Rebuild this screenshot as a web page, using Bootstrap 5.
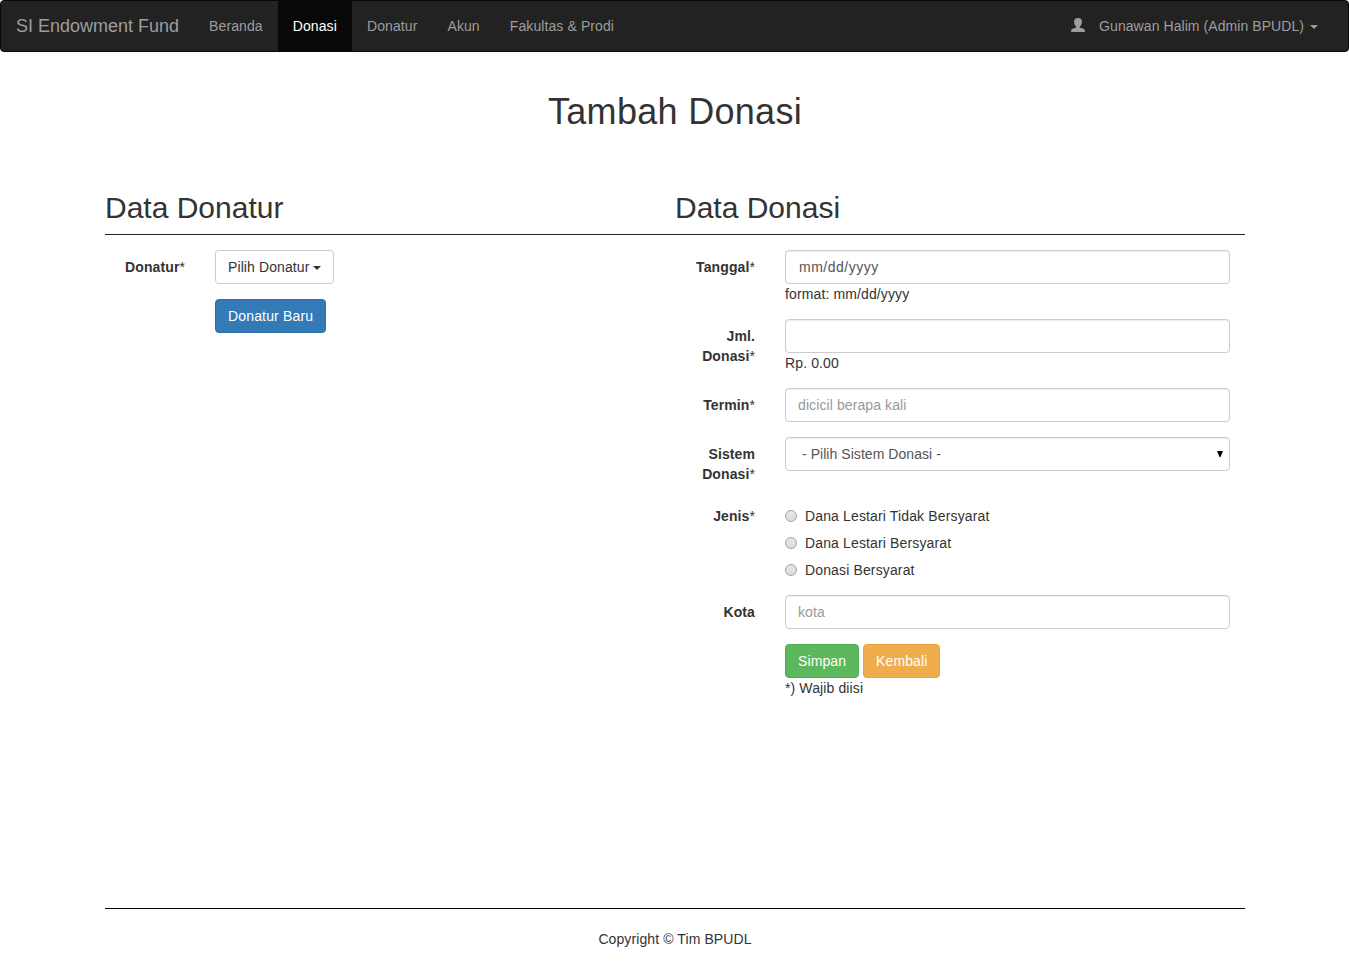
<!DOCTYPE html>
<html lang="id">
<head>
<meta charset="utf-8">
<meta name="viewport" content="width=device-width, initial-scale=1">
<title>Tambah Donasi</title>
<link href="https://cdn.jsdelivr.net/npm/bootstrap@5.3.0/dist/css/bootstrap.min.css" rel="stylesheet">
<style>
body{font-family:"Liberation Sans",Arial,sans-serif;font-size:14px;line-height:20px;letter-spacing:.1px;color:#333;background:#fff}
.topbar{height:52px;background:#222;border:1px solid #080808;border-radius:4px;padding:0 15px;align-items:stretch}
.topbar .navbar-brand{font-size:18px;line-height:20px;letter-spacing:0;padding:15px 0;margin:0 15px 0 0;color:#9d9d9d}
.topbar .navbar-nav .nav-link{padding:15px;color:#9d9d9d;line-height:20px;white-space:nowrap}
.topbar .navbar-nav .nav-link.active{background:#080808;color:#fff}
.arrow-down{display:inline-block;border-top:4px solid;border-left:4px solid transparent;border-right:4px solid transparent;vertical-align:middle;margin-left:2px}
.user-icon{margin:2px 14px 0 0}
.user-name{letter-spacing:.07px}
.page{width:1140px;margin-left:105px}
h1{font-size:36px;line-height:40px;letter-spacing:.3px;margin:40px 0 59px;font-weight:400}
h2{font-size:30px;line-height:33px;letter-spacing:0;margin:0 0 10px;font-weight:400}
.section-rule{border-top:1px solid #222;margin-bottom:15px}
.line-item{margin-bottom:15px}
.line-item>div,.line-item>label,.action-cell{padding:0 15px}
.line-item>label{padding-top:7px;text-align:right;font-weight:700;letter-spacing:.1px}
.req{font-weight:400;color:#333}
.hint{letter-spacing:.12px}
.form-control,.form-select{height:34px;font-size:14px;line-height:20px;letter-spacing:.1px;padding:6px 12px;color:#555;border:1px solid #ccc;border-radius:4px;box-shadow:inset 0 1px 1px rgba(0,0,0,.075)}
.form-control::placeholder{color:#999}
.date-field::placeholder{color:#555}
.date-field{padding-left:13px;letter-spacing:.5px}
.form-select{padding-left:16px;letter-spacing:.05px;background-image:url("data:image/svg+xml,%3Csvg xmlns='http://www.w3.org/2000/svg' width='6' height='6'%3E%3Cpath d='M0 0h6L3.500 6h-1z'/%3E%3C/svg%3E");background-size:6px 6px;background-position:right 6px top 13px}
.btn{font-size:14px;line-height:20px;letter-spacing:.1px;padding:6px 12px;border-radius:4px}
.btn-pick{color:#333;background:#fff;border-color:#ccc}
.btn-primary{background:#337ab7;border-color:#2e6da4;letter-spacing:.16px}
.btn-success{background:#5cb85c;border-color:#4cae4c}
.btn-warning,.btn-warning:hover{background:#f0ad4e;border-color:#eea236;color:#fff}
.choice{padding-top:7px;display:flex;align-items:center;letter-spacing:.14px}
.choice input{appearance:none;width:12px;height:12px;margin:0 8px 0 0;border:1px solid #a3a3a3;border-radius:50%;background:linear-gradient(#e6e6e6,#dcdcdc)}
.form-area{height:658px}
.page-foot{border-top:1px solid #000;padding-top:20px}
</style>
</head>
<body>
<nav class="navbar navbar-expand topbar">
  <a class="navbar-brand" href="#">SI Endowment Fund</a>
  <ul class="navbar-nav me-auto">
    <li class="nav-item"><a class="nav-link" href="#">Beranda</a></li>
    <li class="nav-item"><a class="nav-link active" href="#">Donasi</a></li>
    <li class="nav-item"><a class="nav-link" href="#">Donatur</a></li>
    <li class="nav-item"><a class="nav-link" href="#">Akun</a></li>
    <li class="nav-item"><a class="nav-link" href="#">Fakultas &amp; Prodi</a></li>
  </ul>
  <ul class="navbar-nav">
    <li class="nav-item"><a class="nav-link d-flex" href="#"><svg class="user-icon" width="14" height="14" viewBox="0 0 14 14" fill="currentColor" aria-hidden="true"><path d="M7 0C4.500 0 3 1.500 3 4C3 5.800 3.900 7.500 5.200 8.500V9.600L1 11Q0 11.500 0 14H14Q14 11.500 13 11L8.800 9.600V8.500C10.100 7.500 11 5.800 11 4C11 1.500 9.500 0 7 0Z"/></svg><span class="user-name">Gunawan Halim (Admin BPUDL) <b class="arrow-down"></b></span></a></li>
  </ul>
</nav>
<main class="page">
  <h1 class="text-center">Tambah Donasi</h1>
  <div class="row g-0">
    <div class="col-6"><h2>Data Donatur</h2></div>
    <div class="col-6"><h2>Data Donasi</h2></div>
  </div>
  <div class="section-rule"></div>
  <div class="row g-0 form-area">
    <div class="col-6">
      <div class="row g-0 line-item">
        <label class="col-2">Donatur<span class="req">*</span></label>
        <div class="col-10"><button class="btn btn-pick" type="button">Pilih Donatur <span class="arrow-down ms-0"></span></button></div>
      </div>
      <div class="row g-0 line-item">
        <div class="col-10 offset-2"><button class="btn btn-primary" type="button">Donatur Baru</button></div>
      </div>
    </div>
    <form class="col-6">
      <div class="row g-0 line-item">
        <label class="col-2" for="tanggal">Tanggal<span class="req">*</span></label>
        <div class="col-10"><input id="tanggal" class="form-control date-field" placeholder="mm/dd/yyyy"><div class="hint">format: mm/dd/yyyy</div></div>
      </div>
      <div class="row g-0 line-item">
        <label class="col-2" for="jumlah">Jml. Donasi<span class="req">*</span></label>
        <div class="col-10"><input id="jumlah" class="form-control"><div class="hint">Rp. 0.00</div></div>
      </div>
      <div class="row g-0 line-item">
        <label class="col-2" for="termin">Termin<span class="req">*</span></label>
        <div class="col-10"><input id="termin" class="form-control" placeholder="dicicil berapa kali"></div>
      </div>
      <div class="row g-0 line-item">
        <label class="col-2" for="sistem">Sistem Donasi<span class="req">*</span></label>
        <div class="col-10"><select id="sistem" class="form-select"><option>- Pilih Sistem Donasi -</option></select></div>
      </div>
      <div class="row g-0 line-item">
        <label class="col-2">Jenis<span class="req">*</span></label>
        <div class="col-10">
          <label class="choice"><input type="radio" name="jenis">Dana Lestari Tidak Bersyarat</label>
          <label class="choice"><input type="radio" name="jenis">Dana Lestari Bersyarat</label>
          <label class="choice"><input type="radio" name="jenis">Donasi Bersyarat</label>
        </div>
      </div>
      <div class="row g-0 line-item">
        <label class="col-2" for="kota">Kota</label>
        <div class="col-10"><input id="kota" class="form-control" placeholder="kota"></div>
      </div>
      <div class="row g-0">
        <div class="col-10 offset-2 action-cell">
          <div class="d-flex gap-1"><button class="btn btn-success" type="button">Simpan</button><button class="btn btn-warning" type="button">Kembali</button></div>
          <div class="hint">*) Wajib diisi</div>
        </div>
      </div>
    </form>
  </div>
  <footer class="page-foot text-center">Copyright © Tim BPUDL</footer>
</main>
<script src="https://cdn.jsdelivr.net/npm/bootstrap@5.3.0/dist/js/bootstrap.bundle.min.js"></script>
</body>
</html>
